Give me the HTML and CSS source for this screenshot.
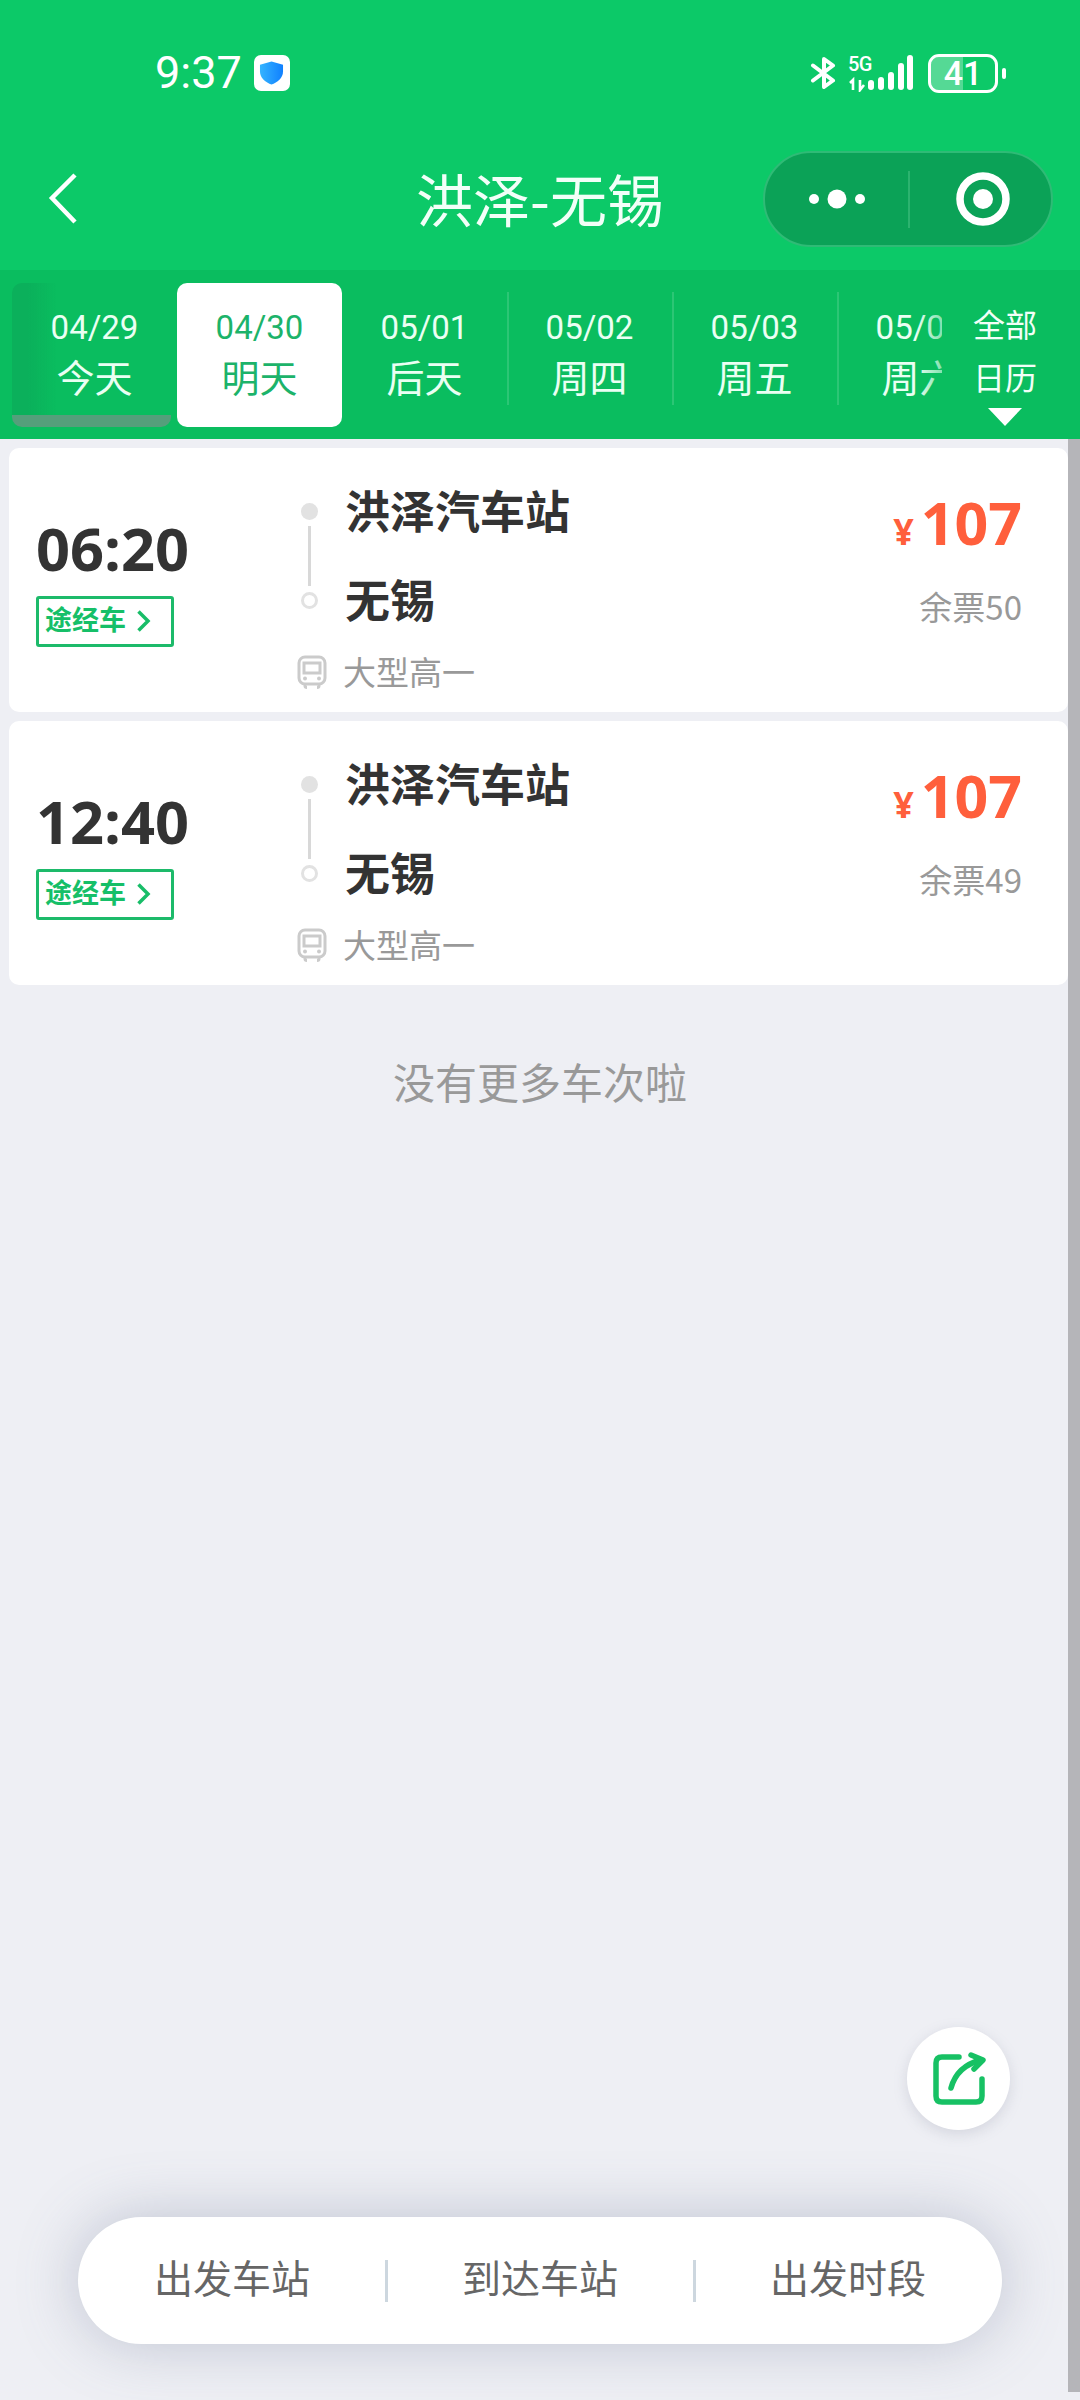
FILE: index.html
```html
<!DOCTYPE html>
<html lang="zh-CN">
<head>
<meta charset="utf-8">
<title>洪泽-无锡</title>
<link rel="stylesheet" href="styles.css">
</head>
<body>
<div class="page">
  <header class="header">
    <div class="status">
      <span class="clock">9:37</span>
      <span class="shield-box">
        <svg width="25" height="24" viewBox="0 0 26 25"><defs><linearGradient id="sg" x1="0" x2="1" y1="0" y2="0"><stop offset="0" stop-color="#35b4ff"/><stop offset="1" stop-color="#1080ff"/></linearGradient></defs><path d="M13 0.5 L25 4 V11 C25 18 19 22.5 13 24.5 C7 22.5 1 18 1 11 V4 Z" fill="url(#sg)"/></svg>
      </span>
      <div class="status-right">
        <svg class="bt" width="26" height="32" viewBox="0 0 26 32"><path d="M3 8.5 L23 23.5 L14 30 V2 L23 8.5 L3 23.5" fill="none" stroke="#fff" stroke-width="4" stroke-linejoin="round" stroke-linecap="round"/></svg>
        <div class="net">
          <span class="net-label">5G</span>
          <svg width="65" height="37" viewBox="0 0 65 37"><g fill="#fff"><rect x="20" y="25" width="6" height="10" rx="3"/><rect x="30" y="22" width="6" height="13" rx="3"/><rect x="40" y="17" width="6" height="18" rx="3"/><rect x="50" y="8" width="6" height="27" rx="3"/><rect x="59" y="0" width="6" height="35" rx="3"/></g><path d="M5 35 V25 L2 28 M12 25 V35 L16 30" fill="none" stroke="#fff" stroke-width="2.6"/></svg>
        </div>
        <div class="battery"><span class="battery-fill"></span><span class="battery-text">41</span></div>
        <span class="battery-nub"></span>
      </div>
    </div>
    <nav class="nav">
      <svg class="back" width="30" height="52" viewBox="0 0 30 52"><path d="M27 2 L4 25 L27 49" fill="none" stroke="#fff" stroke-width="4.5"/></svg>
      <h1 class="title">洪泽-无锡</h1>
      <div class="capsule">
        <div class="capsule-half">
          <svg width="60" height="20" viewBox="0 0 60 20"><g fill="#fff"><circle cx="7" cy="10" r="5"/><circle cx="30" cy="10" r="9.5"/><circle cx="53" cy="10" r="5"/></g></svg>
        </div>
        <div class="capsule-half">
          <svg width="54" height="54" viewBox="0 0 54 54"><circle cx="27" cy="27" r="23" fill="none" stroke="#fff" stroke-width="7.5"/><circle cx="27" cy="27" r="10" fill="#fff"/></svg>
        </div>
      </div>
    </nav>
  </header>

  <section class="strip">
    <div class="rail">
      <div class="tab tab-today"><span class="tab-date">04/29</span><span class="tab-label">今天</span></div>
      <div class="tab tab-active"><span class="tab-date">04/30</span><span class="tab-label">明天</span></div>
      <div class="tab tab-line"><span class="tab-date">05/01</span><span class="tab-label">后天</span></div>
      <div class="tab tab-line"><span class="tab-date">05/02</span><span class="tab-label">周四</span></div>
      <div class="tab tab-line"><span class="tab-date">05/03</span><span class="tab-label">周五</span></div>
      <div class="tab"><span class="tab-date">05/04</span><span class="tab-label">周六</span></div>
    </div>
    <div class="calendar"><span>全部</span><span>日历</span><i class="caret"></i></div>
  </section>

  <main class="list">
    <article class="card">
      <div class="depart">
        <div class="time">06:20</div>
        <div class="tag"><span>途经车</span><svg width="15" height="24" viewBox="0 0 15 24"><path d="M2.5 2.5 L12 12 L2.5 21.5" fill="none" stroke="#18bd68" stroke-width="3.5"/></svg></div>
      </div>
      <div class="route">
        <div class="route-main">
          <div class="dots"><i class="dot-start"></i><i class="dot-line"></i><i class="dot-end"></i></div>
          <div class="stations"><div>洪泽汽车站</div><div>无锡</div></div>
        </div>
        <div class="bus">
          <svg width="30" height="34" viewBox="0 0 30 34"><g fill="none" stroke="#cbcbcb" stroke-width="3"><rect x="2" y="2" width="26" height="27" rx="6"/><path d="M7 8 H23 V18 H7 Z M8 29 V31 Q8 32.500 10 32.500 M22 29 V31 Q22 32.500 20 32.500"/></g><circle cx="8" cy="23.500" r="2" fill="#cbcbcb"/><circle cx="22" cy="23.500" r="2" fill="#cbcbcb"/></svg>
          <span>大型高一</span>
        </div>
      </div>
      <div class="fare">
        <div class="price"><span class="yen">¥</span>107</div>
        <div class="left">余票50</div>
      </div>
    </article>
    <article class="card">
      <div class="depart">
        <div class="time">12:40</div>
        <div class="tag"><span>途经车</span><svg width="15" height="24" viewBox="0 0 15 24"><path d="M2.5 2.5 L12 12 L2.5 21.5" fill="none" stroke="#18bd68" stroke-width="3.5"/></svg></div>
      </div>
      <div class="route">
        <div class="route-main">
          <div class="dots"><i class="dot-start"></i><i class="dot-line"></i><i class="dot-end"></i></div>
          <div class="stations"><div>洪泽汽车站</div><div>无锡</div></div>
        </div>
        <div class="bus">
          <svg width="30" height="34" viewBox="0 0 30 34"><g fill="none" stroke="#cbcbcb" stroke-width="3"><rect x="2" y="2" width="26" height="27" rx="6"/><path d="M7 8 H23 V18 H7 Z M8 29 V31 Q8 32.500 10 32.500 M22 29 V31 Q22 32.500 20 32.500"/></g><circle cx="8" cy="23.500" r="2" fill="#cbcbcb"/><circle cx="22" cy="23.500" r="2" fill="#cbcbcb"/></svg>
          <span>大型高一</span>
        </div>
      </div>
      <div class="fare">
        <div class="price"><span class="yen">¥</span>107</div>
        <div class="left">余票49</div>
      </div>
    </article>
    <p class="end">没有更多车次啦</p>
  </main>

  <div class="scrollbar"></div>

  <button class="fab" type="button" aria-label="分享">
    <svg width="54" height="54" viewBox="0 0 54 54"><g fill="none" stroke="#17c164" stroke-width="5.500" stroke-linecap="round" stroke-linejoin="round"><path d="M27 5 H10 Q4 5 4 11 V44 Q4 50 10 50 H44 Q50 50 50 44 V27"/><path d="M19 36 Q25 14 49 8"/><path d="M39 3 L51 8 L42 17"/></g></svg>
  </button>

  <div class="filters">
    <div class="filter">出发车站</div>
    <div class="filter">到达车站</div>
    <div class="filter">出发时段</div>
  </div>
</div>
</body>
</html>
```
FILE: styles.css
```css
* { box-sizing: border-box; }
html, body { margin: 0; padding: 0; }
body {
  font-family: "Noto Sans CJK SC", "Noto Sans", sans-serif;
  background: #eeeff4;
}
.page {
  position: relative;
  width: 1080px;
  height: 2400px;
  overflow: hidden;
  background: #eeeff4;
}
.header { height: 270px; background: #0cc968; color: #fff; }
.status { display: flex; align-items: center; height: 146px; padding: 0 74px 0 155px; }
.clock { font-family: Roboto, sans-serif; font-size: 45px; line-height: 50px; color: #fff; }
.shield-box {
  display: flex; align-items: center; justify-content: center;
  width: 36px; height: 36px; margin-left: 12px;
  background: #fff; border-radius: 7px;
}
.status-right { display: flex; align-items: center; margin-left: auto; }
.bt { margin-right: 12px; }
.net { position: relative; width: 65px; height: 37px; margin-right: 15px; }
.net svg { display: block; }
.net-label {
  position: absolute; top: -1px; left: 0;
  font-family: Roboto, sans-serif; font-weight: 500; font-size: 20px; line-height: 20px;
  letter-spacing: -0.5px; color: #fff;
}
.battery {
  position: relative; display: flex; align-items: center; justify-content: center;
  width: 70px; height: 39px; border: 3px solid #fff; border-radius: 11px; overflow: hidden;
}
.battery-fill { position: absolute; left: 0; top: 0; bottom: 0; width: 32px; background: rgba(255,255,255,.3); }
.battery-text { position: relative; font-family: Roboto, sans-serif; font-weight: 500; font-size: 34px; line-height: 34px; color: #fff; }
.battery-nub { width: 4px; height: 11px; margin-left: 4px; background: #fff; border-radius: 2px; }

.nav { display: grid; grid-template-columns: 1fr auto 1fr; align-items: center; height: 106px; padding: 0 27px; }
.back { display: block; margin-left: 21px; }
.title { margin: -4px 0 0; font-size: 57px; line-height: 70px; font-weight: 400; color: #f2fff8; white-space: nowrap; }
.capsule {
  justify-self: end; display: flex; align-items: center;
  width: 290px; height: 96px;
  background: #0ba257; border: 2px solid #2fbb76; border-radius: 48px;
}
.capsule-half { flex: 0 0 143px; display: flex; align-items: center; justify-content: center; height: 57px; }
.capsule-half + .capsule-half { flex: 1; padding-left: 5px; border-left: 2px solid #2cb36f; }
.capsule-half svg { display: block; }

.strip { display: flex; height: 169px; padding: 13px 0 0 12px; background: #0abd5f; }
.rail { position: relative; display: flex; width: 930px; height: 144px; overflow: hidden; }
.rail::after {
  content: ""; position: absolute; right: 0; top: 0; bottom: 0; width: 26px;
  background: linear-gradient(90deg, rgba(10,189,95,0), rgba(10,189,95,.45));
}
.tab {
  position: relative; flex: 0 0 165px; display: flex; flex-direction: column; align-items: center;
  height: 144px; padding-top: 21px; color: #eafff3;
}
.tab-date { font-family: Roboto, sans-serif; font-weight: 400; font-size: 33px; line-height: 48px; }
.tab-label { font-size: 38px; line-height: 48px; font-weight: 400; }
.tab-today::before {
  content: ""; position: absolute; left: 0; top: 0; bottom: 0; right: 6px;
  border-radius: 10px;
  background:
    linear-gradient(#559f7b, #559f7b) left bottom / 100% 12px no-repeat,
    linear-gradient(90deg, #0bb05b 0, #0bb05b 16px, rgba(10,189,95,0) 44px);
}
.tab-today > span { position: relative; }
.tab-active { background: #fff; border-radius: 10px; color: #1cb36a; }
.tab-line::after {
  content: ""; position: absolute; right: -2px; top: 9px; height: 113px; width: 2px;
  background: rgba(255,255,255,.14);
}
.calendar {
  flex: 1; display: flex; flex-direction: column; align-items: center;
  padding: 14px 12px 0 0;
  font-size: 32px; line-height: 53px; font-weight: 400; color: #f2fff8;
}
.caret {
  width: 0; height: 0; margin-top: 5px;
  border-left: 17px solid transparent; border-right: 17px solid transparent; border-top: 18px solid #fff;
}

.list { padding: 9px 0 0 9px; }
.card {
  display: flex; width: 1059px; height: 264px; margin-bottom: 9px;
  background: #fff; border-radius: 10px; color: #333;
}
.depart { flex: 0 0 288px; padding: 65px 0 0 27px; }
.time { font-size: 59.500px; line-height: 70px; font-weight: 700; font-family: "Open Sans", "Noto Sans", sans-serif; color: #333; }
.tag {
  display: flex; align-items: center; gap: 10px;
  width: 138px; height: 51px; margin-top: 13px; padding: 0 0 5px 6px;
  border: 3px solid #1dba6a; border-radius: 3px;
  font-size: 27px; line-height: 30px; font-weight: 700; color: #16bf68; white-space: nowrap;
}
.tag svg { display: block; margin-top: 4px; }
.route { flex: 1; }
.route-main { display: flex; padding: 32px 0 0 4px; }
.dots { display: flex; flex-direction: column; align-items: center; gap: 6px; width: 17px; margin: 23px 27px 0 0; }
.dots i { display: block; }
.dot-start { width: 17px; height: 17px; border-radius: 50%; background: #e2e2e2; }
.dot-line { width: 3px; height: 60px; background: #d8d8d8; }
.dot-end { width: 17px; height: 17px; border-radius: 50%; border: 3px solid #e2e2e2; background: #fff; }
.stations { font-size: 45px; line-height: 60px; font-weight: 700; color: #333; }
.stations div + div { margin-top: 29px; }
.bus { display: flex; align-items: center; gap: 16px; height: 40px; margin-top: 22px; font-size: 33px; line-height: 40px; color: #999; }
.bus svg { display: block; margin-top: 1px; }
.fare { padding: 39px 46px 0 0; text-align: right; }
.price { font-family: "Open Sans", "Noto Sans", sans-serif; font-size: 59px; line-height: 70px; font-weight: 700; color: #ff5f3c; white-space: nowrap; }
.yen { margin-right: 7px; font-size: 36px; }
.left { margin-top: 19px; font-size: 33px; line-height: 40px; color: #999; white-space: nowrap; }
.end { margin: 66px 0 0 -9px; text-align: center; font-size: 42px; line-height: 60px; color: #999; }

.scrollbar { position: absolute; right: 0; top: 439px; width: 12px; height: 1953px; background: #b5b5b9; }
.fab {
  position: absolute; left: 907px; top: 2027px;
  display: flex; align-items: center; justify-content: center;
  width: 103px; height: 103px; padding: 0; border: 0; border-radius: 50%;
  background: #fff; box-shadow: 0 4px 14px rgba(120,125,145,.22);
}
.filters {
  position: absolute; left: 78px; top: 2217px;
  display: flex; align-items: center;
  width: 924px; height: 127px; background: #fff; border-radius: 64px;
  box-shadow: 0 0 60px rgba(100,112,145,.34);
}
.filter { position: relative; flex: 1; padding-bottom: 10px; text-align: center; font-size: 39px; line-height: 50px; color: #666; }
.filter + .filter::before {
  content: ""; position: absolute; left: -1px; top: 9px; width: 3px; height: 42px; background: #cdd7df;
}
```
